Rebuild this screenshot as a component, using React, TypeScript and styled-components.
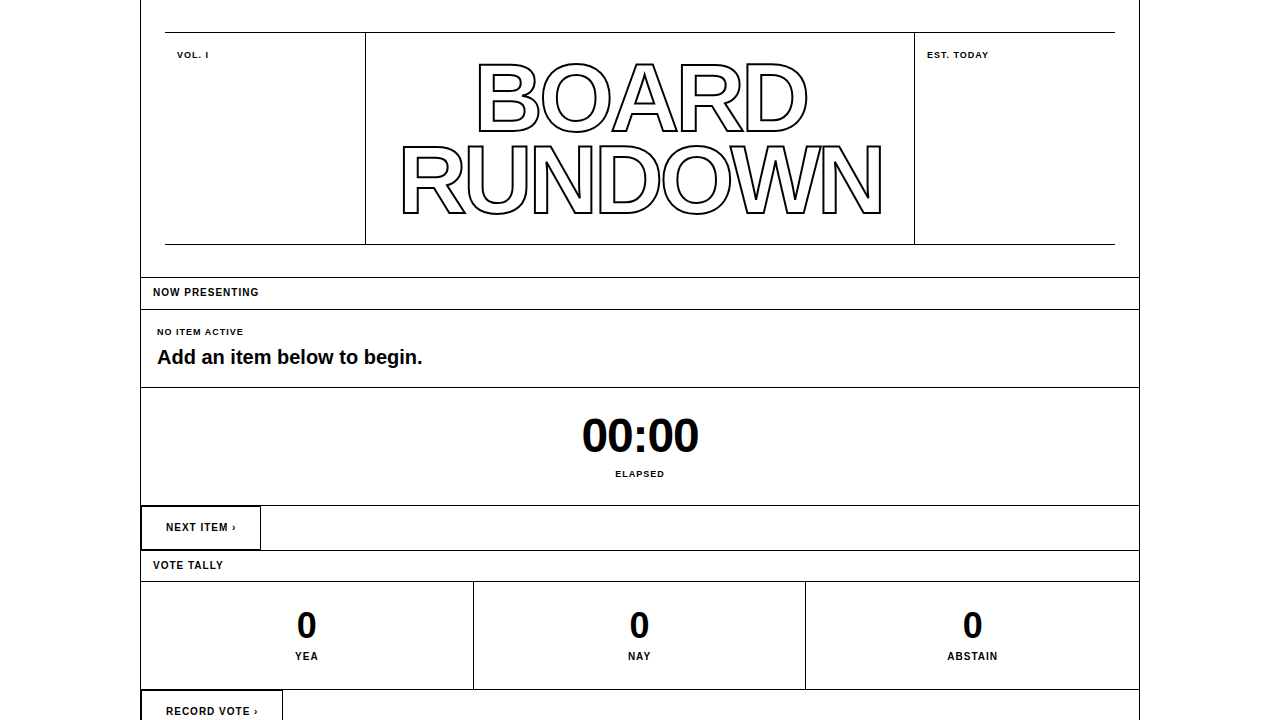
import React, { useState } from "react";
import styled, { createGlobalStyle } from "styled-components";

const GlobalStyle = createGlobalStyle`
  *, *::before, *::after { box-sizing: border-box; }
  body {
    margin: 0;
    background: #fff;
    color: #000;
    font-family: "Liberation Sans", Arial, Helvetica, sans-serif;
    font-size: 16px;
    line-height: 1.5;
  }
`;

const Sheet = styled.main`
  max-width: 1000px;
  min-height: 100vh;
  margin: 0 auto;
  border: solid #000;
  border-width: 0 1px;
`;

const Masthead = styled.header`
  padding: 32px 24px;
  border-bottom: 1px solid #000;
`;

const MastheadGrid = styled.div`
  display: grid;
  grid-template-columns: 200px 1fr 200px;
  border: solid #000;
  border-width: 1px 0;

  @media (max-width: 900px) {
    grid-template-columns: 1fr;
  }
`;

const MastheadAside = styled.div`
  padding: 16px 12px;
`;

const Title = styled.h1`
  margin: 0;
  padding: 24px;
  border: solid #000;
  border-width: 0 1px;
  font-size: 96px;
  font-weight: 700;
  line-height: 0.85;
  letter-spacing: -0.04em;
  text-align: center;
  text-transform: uppercase;
  color: transparent;
  -webkit-text-stroke: 2px #000;

  @media (max-width: 900px) {
    border-width: 1px 0;
    font-size: 56px;
  }
`;

const Caption = styled.p`
  margin: 0;
  font-size: 9px;
  font-weight: 700;
  line-height: 13px;
  letter-spacing: 1px;
  text-transform: uppercase;
`;

const SectionLabel = styled.h2`
  margin: 0;
  padding: 8px 12px;
  border-bottom: 1px solid #000;
  font-size: 10px;
  font-weight: 700;
  line-height: 1.45;
  letter-spacing: 1px;
  text-transform: uppercase;
`;

const CurrentItem = styled.div`
  display: grid;
  gap: 4px;
  padding: 16px;
  border-bottom: 1px solid #000;
`;

const ItemTitle = styled.p`
  margin: 0;
  font-size: 20px;
  font-weight: 700;
  line-height: 28px;
`;

const Timer = styled.div`
  display: grid;
  gap: 8px;
  padding: 24px;
  border-bottom: 1px solid #000;
  text-align: center;
`;

const Clock = styled.div`
  font-size: 48px;
  font-weight: 700;
  line-height: 48px;
  letter-spacing: -0.025em;
  font-variant-numeric: tabular-nums;
`;

const ActionRow = styled.div`
  display: flex;
  border-bottom: 1px solid #000;
`;

const ActionButton = styled.button`
  height: 44px;
  padding: 0 24px;
  border: 1px solid #000;
  border-radius: 0;
  background: #fff;
  color: #000;
  font-family: inherit;
  font-size: 10px;
  font-weight: 700;
  letter-spacing: 1px;
  text-transform: uppercase;
  cursor: pointer;

  &:hover {
    background: #000;
    color: #fff;
  }
`;

const TallyGrid = styled.dl`
  display: grid;
  grid-template-columns: repeat(3, 1fr);
  margin: 0;
  border-bottom: 1px solid #000;
`;

const TallyCell = styled.div`
  display: flex;
  flex-direction: column-reverse;
  gap: 4px;
  padding: 24px;
  text-align: center;

  &:not(:last-child) {
    border-right: 1px solid #000;
  }
`;

const TallyCount = styled.dd`
  margin: 0;
  font-size: 36px;
  font-weight: 700;
  line-height: 40px;
`;

const TallyName = styled.dt`
  font-size: 10px;
  font-weight: 700;
  line-height: 1.45;
  letter-spacing: 1px;
  text-transform: uppercase;
`;

const tally = [
  { name: "Yea", count: 0 },
  { name: "Nay", count: 0 },
  { name: "Abstain", count: 0 },
];

export default function App() {
  const [votes] = useState(tally);

  return (
    <>
      <GlobalStyle />
      <Sheet>
        <Masthead>
          <MastheadGrid>
            <MastheadAside>
              <Caption>Vol. I</Caption>
            </MastheadAside>
            <Title>Board Rundown</Title>
            <MastheadAside>
              <Caption>Est. Today</Caption>
            </MastheadAside>
          </MastheadGrid>
        </Masthead>

        <section>
          <SectionLabel>Now Presenting</SectionLabel>
          <CurrentItem>
            <Caption>No Item Active</Caption>
            <ItemTitle>Add an item below to begin.</ItemTitle>
          </CurrentItem>
          <Timer>
            <Clock role="timer">00:00</Clock>
            <Caption>Elapsed</Caption>
          </Timer>
          <ActionRow>
            <ActionButton type="button">Next Item ›</ActionButton>
          </ActionRow>
        </section>

        <section>
          <SectionLabel>Vote Tally</SectionLabel>
          <TallyGrid>
            {votes.map((vote) => (
              <TallyCell key={vote.name}>
                <TallyName>{vote.name}</TallyName>
                <TallyCount>{vote.count}</TallyCount>
              </TallyCell>
            ))}
          </TallyGrid>
          <ActionRow>
            <ActionButton type="button">Record Vote ›</ActionButton>
          </ActionRow>
        </section>
      </Sheet>
    </>
  );
}
